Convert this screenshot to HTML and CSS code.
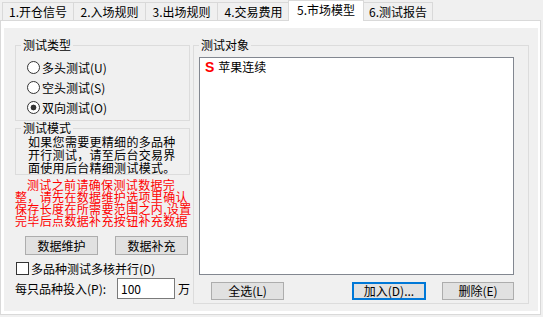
FILE: index.html
```html
<!DOCTYPE html>
<html lang="zh">
<head>
<meta charset="utf-8">
<link rel="stylesheet" href="styles.css">
</head>
<body>
<div class="tabs">
  <div class="tab t1">1.开仓信号</div>
  <div class="tab t2">2.入场规则</div>
  <div class="tab t3">3.出场规则</div>
  <div class="tab t4">4.交易费用</div>
  <div class="tab t5">5.市场模型</div>
  <div class="tab t6">6.测试报告</div>
</div>
<div class="panel">
  <div class="inner">
    <div class="leftcol">
      <fieldset class="group g-type">
        <legend>测试类型</legend>
        <div class="radios">
          <div class="radio-row"><span class="radio"></span>多头测试(U)</div>
          <div class="radio-row"><span class="radio"></span>空头测试(S)</div>
          <div class="radio-row"><span class="radio checked"></span>双向测试(O)</div>
        </div>
      </fieldset>
      <fieldset class="group g-mode">
        <legend>测试模式</legend>
        <div class="mode-text">
          <div>如果您需要更精细的多品种</div>
          <div>开行测试，请至后台交易界</div>
          <div>面使用后台精细测试模式。</div>
        </div>
      </fieldset>
      <div class="warn">
        <div class="warn-first">测试之前请确保测试数据完</div>
        <div>整，请先在数据维护选项里确认</div>
        <div>保存长度在所需要范围之内,设置</div>
        <div>完毕后点数据补充按钮补充数据</div>
      </div>
      <div class="btnrow">
        <button class="btn btn-left">数据维护</button>
        <button class="btn btn-left">数据补充</button>
      </div>
      <div class="check-row"><span class="checkbox"></span>多品种测试多核并行(D)</div>
      <div class="invest-row">
        <span class="invest-label">每只品种投入(P):</span>
        <span class="input">100</span>
        <span class="unit">万</span>
      </div>
    </div>
    <fieldset class="group g-obj">
      <legend>测试对象</legend>
      <div class="listbox">
        <div class="item"><span class="tag">S</span>苹果连续</div>
      </div>
      <div class="objbtns">
        <button class="btn btn-all">全选(L)</button>
        <button class="btn btn-add">加入(D)...</button>
        <button class="btn btn-del">删除(E)</button>
      </div>
    </fieldset>
  </div>
</div>
</body>
</html>
```

FILE: styles.css
```css
* { box-sizing: border-box; }
html, body { margin: 0; padding: 0; }
body {
  width: 543px;
  height: 317px;
  overflow: hidden;
  background: #f0f0f0;
  font-family: "Noto Sans CJK SC", "Noto Sans", sans-serif;
  font-size: 12px;
  color: #000;
}

.tabs {
  display: flex;
  align-items: flex-end;
  height: 20px;
  padding-left: 2px;
}
.tab {
  height: 18px;
  border: 1px solid #d9d9d9;
  border-bottom: 0;
  margin-left: -1px;
  line-height: 17px;
  text-align: center;
  background: #f0f0f0;
  white-space: nowrap;
  flex-shrink: 0;
}
.t1 { width: 72px; margin-left: 0; }
.t2, .t3, .t4 { width: 73px; }
.t5 {
  width: 76px;
  height: 21px;
  margin-left: -2px;
  margin-bottom: -1px;
  background: #fff;
  position: relative;
  z-index: 2;
  line-height: 18px;
}
.t6 { width: 70px; }

.panel {
  width: 541px;
  height: 295px;
  border: 1px solid #d9d9d9;
  background: #fff;
  padding: 7px 2px 3px 3px;
}
.inner {
  background: #f0f0f0;
  height: 100%;
  display: flex;
  align-items: flex-start;
  gap: 3px;
  padding: 10px 0 0 11px;
}
.leftcol {
  width: 175px;
  flex-shrink: 0;
}

fieldset.group {
  margin: 0;
  border: 1px solid #dcdcdc;
  min-width: 0;
}
legend {
  padding: 0 2px;
  height: 14px;
  line-height: 14px;
}

.g-type { padding: 5px 0 3px 5px; }
.radios { margin-left: 6px; }
.radio-row {
  display: flex;
  align-items: center;
  height: 20px;
  white-space: nowrap;
}
.radio {
  width: 13px;
  height: 13px;
  border: 1px solid #333;
  border-radius: 50%;
  background: #fff;
  margin-right: 2px;
  flex-shrink: 0;
}
.radio.checked {
  background: radial-gradient(circle, #333 0 2.6px, #fff 3.2px);
}

.g-mode {
  margin-top: 2px;
  padding: 0 0 0 5px;
}
.mode-text {
  margin-left: 7px;
  line-height: 13px;
  letter-spacing: 0.3px;
  white-space: nowrap;
}

.warn {
  margin-top: 4px;
  color: #ff0000;
  line-height: 12px;
  letter-spacing: 0.35px;
  white-space: nowrap;
}
.warn-first { padding-left: 12px; }

.btn {
  font-family: inherit;
  font-size: 12px;
  color: #000;
  background: #e1e1e1;
  border: 1px solid #adadad;
  padding: 0;
  margin: 0;
  height: 18px;
  line-height: 16px;
  flex-shrink: 0;
}
.btnrow {
  display: flex;
  gap: 17px;
  margin-top: 9px;
  padding-left: 10px;
}
.btn-left { width: 73px; height: 19px; }

.check-row {
  display: flex;
  align-items: center;
  height: 16px;
  margin-top: 5px;
  white-space: nowrap;
}
.checkbox {
  width: 13px;
  height: 13px;
  border: 1px solid #333;
  background: #fff;
  margin-left: 1px;
  margin-right: 2px;
  flex-shrink: 0;
}

.invest-row {
  display: flex;
  align-items: center;
  height: 21px;
  margin-top: 2px;
  white-space: nowrap;
}
.invest-label { width: 102px; flex-shrink: 0; }
.input {
  width: 58px;
  height: 21px;
  border: 1px solid #7a7a7a;
  background: #fff;
  padding-left: 3px;
  line-height: 19px;
  flex-shrink: 0;
}
.unit { margin-left: 3px; }

.g-obj {
  width: 336px;
  flex-shrink: 0;
  padding: 5px 14px 3px 5px;
}
.listbox {
  width: 315px;
  height: 218px;
  border: 1px solid #828790;
  background: #fff;
  padding: 2px 0 0 5px;
}
.item {
  display: flex;
  align-items: center;
  height: 14px;
  line-height: 14px;
  white-space: nowrap;
}
.tag {
  color: #ff0000;
  font-family: "Liberation Sans", Arial, sans-serif;
  font-weight: bold;
  font-size: 14px;
  margin-right: 4px;
}
.objbtns {
  display: flex;
  margin-top: 7px;
  padding-left: 12px;
}
.btn-all { width: 73px; }
.btn-add {
  width: 74px;
  margin-left: 68px;
  border: 2px solid #0078d7;
  line-height: 14px;
}
.btn-del { width: 72px; margin-left: 16px; }
```
